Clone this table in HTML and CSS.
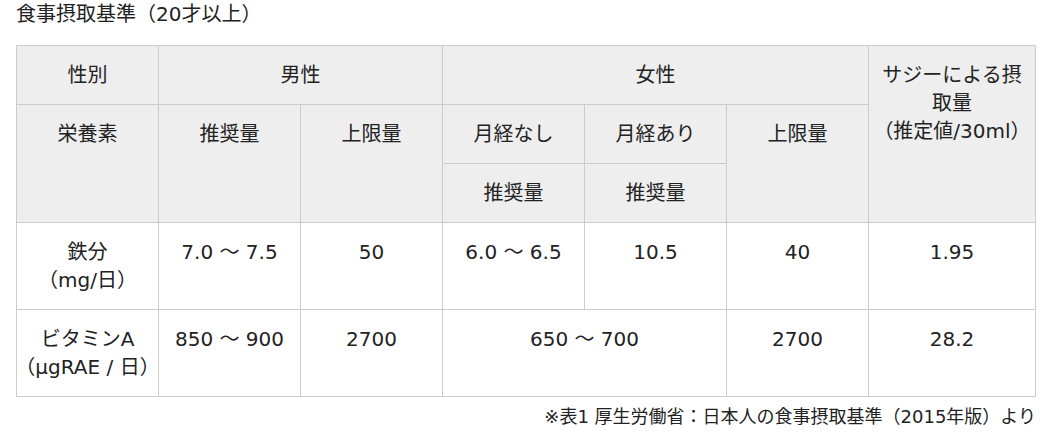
FILE: index.html
```html
<!DOCTYPE html>
<html lang="ja">
<head>
<meta charset="utf-8">
<title>食事摂取基準</title>
<link rel="stylesheet" href="styles.css">
</head>
<body>
<div class="page">
  <h2 class="title">食事摂取基準（20才以上）</h2>
  <table class="intake">
    <colgroup>
      <col class="c"><col class="c"><col class="c"><col class="c"><col class="c"><col class="c"><col class="last">
    </colgroup>
    <thead>
      <tr>
        <th>性別</th>
        <th colspan="2">男性</th>
        <th colspan="3">女性</th>
        <th rowspan="3"><div class="stack"><span>サジーによる摂</span><span>取量</span><span>（推定値/30ml）</span></div></th>
      </tr>
      <tr>
        <th rowspan="2">栄養素</th>
        <th rowspan="2">推奨量</th>
        <th rowspan="2">上限量</th>
        <th>月経なし</th>
        <th>月経あり</th>
        <th rowspan="2">上限量</th>
      </tr>
      <tr>
        <th>推奨量</th>
        <th>推奨量</th>
      </tr>
    </thead>
    <tbody>
      <tr>
        <td><div class="stack"><span>鉄分</span><span>（mg/日）</span></div></td>
        <td>7.0 ～ 7.5</td>
        <td>50</td>
        <td>6.0 ～ 6.5</td>
        <td>10.5</td>
        <td>40</td>
        <td>1.95</td>
      </tr>
      <tr>
        <td><div class="stack"><span>ビタミンA</span><span>（μgRAE / 日）</span></div></td>
        <td>850 ～ 900</td>
        <td>2700</td>
        <td colspan="2">650 ～ 700</td>
        <td>2700</td>
        <td>28.2</td>
      </tr>
    </tbody>
  </table>
  <p class="note">※表1 厚生労働省：日本人の食事摂取基準（2015年版）より</p>
</div>
</body>
</html>
```

FILE: styles.css
```css
html, body {
  margin: 0;
  padding: 0;
  background: #ffffff;
}

body {
  font-family: "DejaVu Sans", "Noto Sans CJK JP", sans-serif;
  color: #222222;
}

.page {
  width: 1020px;
  margin-left: 16px;
}

.title {
  margin: 0;
  font-size: 20px;
  font-weight: normal;
  line-height: 28px;
}

.intake {
  margin-top: 17px;
  width: 1020px;
  table-layout: fixed;
  border-collapse: collapse;
  font-size: 20px;
  line-height: 28px;
}

.intake col.c {
  width: 142px;
}

.intake th,
.intake td {
  border: 1px solid #cccccc;
  padding: 15px 2px 15px;
  text-align: center;
  vertical-align: top;
  font-weight: normal;
  white-space: nowrap;
}

.intake th {
  background: #eeeeee;
}

.intake td {
  background: #ffffff;
}

.stack {
  display: flex;
  flex-direction: column;
  align-items: center;
}

.note {
  margin: 6px 0 0;
  font-size: 18px;
  line-height: 28px;
  text-align: right;
}
```
